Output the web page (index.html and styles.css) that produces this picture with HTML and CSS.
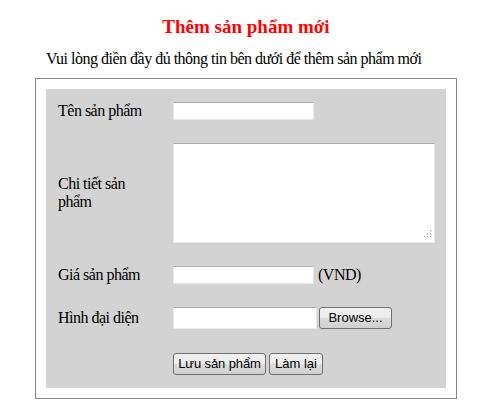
FILE: index.html
```html
<!DOCTYPE html>
<html lang="vi">
<head>
<meta charset="utf-8">
<title>Thêm sản phẩm mới</title>
<link rel="stylesheet" href="styles.css">
</head>
<body>
<h3 class="title">Thêm sản phẩm mới</h3>
<p class="intro">Vui lòng điền đầy đủ thông tin bên dưới để thêm sản phẩm mới</p>
<div class="box">
  <form class="panel">
    <label class="label" for="name">Tên sản phẩm</label>
    <div class="field"><input class="text" id="name" type="text"></div>

    <label class="label" for="detail">Chi tiết sản phẩm</label>
    <div class="field">
      <div class="area-wrap">
        <textarea class="area" id="detail"></textarea>
        <svg class="grip" width="10" height="10" viewBox="0 0 10 10" aria-hidden="true">
          <rect x="8" y="0" width="1" height="1" fill="#9a9a9a"/>
          <rect x="5" y="3" width="1" height="1" fill="#9a9a9a"/>
          <rect x="8" y="3" width="1" height="1" fill="#9a9a9a"/>
          <rect x="2" y="6" width="1" height="1" fill="#9a9a9a"/>
          <rect x="5" y="6" width="1" height="1" fill="#9a9a9a"/>
          <rect x="8" y="6" width="1" height="1" fill="#9a9a9a"/>
          <rect x="3" y="7" width="1" height="1" fill="#d0d0d0"/>
          <rect x="6" y="7" width="1" height="1" fill="#d0d0d0"/>
          <rect x="9" y="7" width="1" height="1" fill="#d0d0d0"/>
          <rect x="6" y="4" width="1" height="1" fill="#d0d0d0"/>
          <rect x="9" y="4" width="1" height="1" fill="#d0d0d0"/>
          <rect x="9" y="1" width="1" height="1" fill="#d0d0d0"/>
        </svg>
      </div>
    </div>

    <label class="label" for="price">Giá sản phẩm</label>
    <div class="field"><input class="text" id="price" type="text"><span class="unit">(VND)</span></div>

    <label class="label" for="img">Hình đại diện</label>
    <div class="field file"><input class="filebox" id="img" type="text" readonly><button class="btn browse" type="button">Browse...</button></div>

    <div class="actions">
      <button class="btn save" type="submit">Lưu sản phẩm</button><button class="btn reset" type="reset">Làm lại</button>
    </div>
  </form>
</div>
</body>
</html>
```
FILE: styles.css
```css
html, body {
  background: #ffffff;
}
body {
  margin: 0;
  padding: 16px 8px 8px;
  font-family: "Liberation Serif", "Times New Roman", serif;
  font-size: 16px;
  color: #000;
}
.title {
  margin: 0 3px 0 0;
  text-align: center;
  color: #ff0000;
  font-size: 19px;
  font-weight: bold;
}
.intro {
  margin: 12px 0 0 38px;
  letter-spacing: -0.5px;
}
.box {
  margin: 10px 0 0 27px;
  width: 400px;
  border: 1px solid #878787;
  padding: 10px;
}
.panel {
  background: #d3d3d3;
  display: grid;
  grid-template-columns: 115px 1fr;
  row-gap: 23px;
  align-items: center;
  padding: 13px 0 13px 12px;
  margin: 0;
}
.label {
  width: 100px;
  line-height: 18px;
  letter-spacing: -0.5px;
}
.field {
  display: flex;
  align-items: center;
}
.text, .filebox, .area {
  box-sizing: border-box;
  background: #fff;
  border: 1px solid #e3e9ef;
  border-top-color: #abadb3;
  margin: 0;
  padding: 1px 2px;
  font-family: "Liberation Sans", Arial, sans-serif;
  font-size: 13px;
  outline: none;
}
.text {
  width: 141px;
  height: 18px;
}
.area-wrap {
  position: relative;
  width: 262px;
  height: 100px;
}
.area {
  display: block;
  width: 262px;
  height: 100px;
  resize: none;
}
.grip {
  position: absolute;
  right: 3px;
  bottom: 3px;
  display: block;
}
.unit {
  margin-left: 4px;
  letter-spacing: -0.5px;
}
.filebox {
  width: 144px;
  height: 22px;
}
.btn {
  box-sizing: border-box;
  height: 22px;
  margin: 0;
  padding: 0 4px;
  border: 1px solid #707070;
  border-radius: 3px;
  background: linear-gradient(#f2f2f2 0%, #ebebeb 50%, #dddddd 51%, #cfcfcf 100%);
  font-family: "Liberation Sans", Arial, sans-serif;
  font-size: 13px;
  color: #000;
  line-height: 18px;
}
.save {
  width: 93px;
  letter-spacing: -0.1px;
}
.reset {
  width: 54px;
}
.browse {
  width: 73px;
  margin-left: 2px;
}
.actions {
  grid-column: 1 / span 2;
  display: flex;
  justify-content: center;
  gap: 3px;
  margin-top: 1px;
  padding-right: 8px;
}
```
